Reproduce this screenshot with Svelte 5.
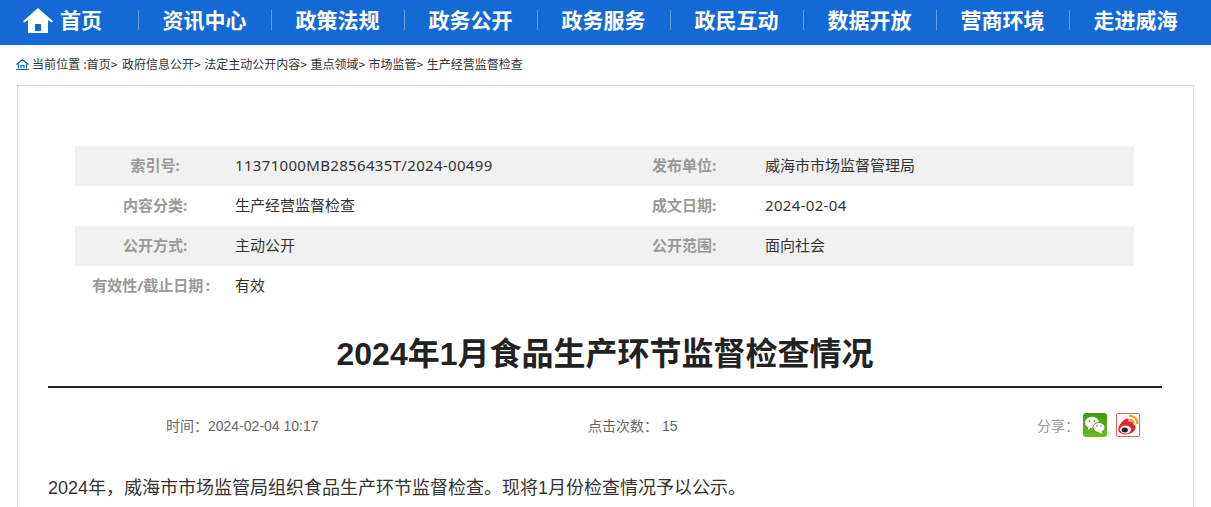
<script>
  const nav = ['资讯中心','政策法规','政务公开','政务服务','政民互动','数据开放','营商环境','走进威海'];
  const crumbs = ['政府信息公开','法定主动公开内容','重点领域','市场监管'];
  const rows = [
    [['索引号:','11371000MB2856435T/2024-00499'],['发布单位:','威海市市场监督管理局']],
    [['内容分类:','生产经营监督检查'],['成文日期:','2024-02-04']],
    [['公开方式:','主动公开'],['公开范围:','面向社会']],
    [['有效性/截止日期\u2009:\u00a0\u00a0','有效'],['','']]
  ];
  const isLatin = (s) => /^[\x00-\x7f]+$/.test(s);
</script>

<div class="page">
  <nav class="nav">
    <a class="item home">
      <svg class="house" viewBox="0 0 30 25" width="30" height="25" aria-hidden="true">
        <path fill="#fff" fill-rule="evenodd" d="M15 0 L30 13.2 L28.6 14.6 L25 12 L25 25 L5 25 L5 12 L1.4 14.6 L0 13.2 Z M12 16 L12 23 L18 23 L18 16 Z"/>
      </svg>
      <span>首页</span>
    </a>
    {#each nav as label}
      <a class="item">{label}</a>
    {/each}
  </nav>

  <div class="crumbs">
    <svg class="crumb-icon" viewBox="0 0 13 11" width="13" height="11" aria-hidden="true">
      <path fill="none" stroke="#0f5fb8" stroke-width="1.1" d="M0.5 5.5 L6.5 0.8 L12.5 5.5 M2.5 4.5 V9.5 M10.5 4.5 V9.5 M5 9.5 V6.5 H8 V9.5"/>
      <path stroke="#0f5fb8" stroke-width="1.1" d="M0 10.5 H13"/>
    </svg>
    <span class="first">当前位置 :首页&gt;</span>
    {#each crumbs as c}<span>{c}&gt;</span>{/each}
    <span>生产经营监督检查</span>
  </div>

  <main class="card">
    <div class="info">
      {#each rows as row}
        <div class="row">
          {#each row as cell}
            <div class="label">{cell[0]}</div>
            <div class="value" class:latin={isLatin(cell[1])}>{cell[1]}</div>
          {/each}
        </div>
      {/each}
    </div>

    <h1 class="title">2024年1月食品生产环节监督检查情况</h1>

    <div class="meta">
      <span class="time">时间：2024-02-04 10:17</span>
      <span class="hits">点击次数： 15</span>
      <span class="share">
        <span class="share-label">分享：</span>
        <svg class="wx" viewBox="0 0 24 24" width="24" height="24" aria-hidden="true">
          <defs>
            <linearGradient id="g" x1="0" y1="0" x2="0" y2="1">
              <stop offset="0" stop-color="#3f9a12"/><stop offset="1" stop-color="#6cbb1f"/>
            </linearGradient>
          </defs>
          <rect width="24" height="24" rx="3" fill="url(#g)"/>
          <ellipse cx="9" cy="9.5" rx="7" ry="5.8" fill="#fff"/>
          <path fill="#fff" d="M5.5 13 L5 17 L9.5 14 Z"/>
          <ellipse cx="16" cy="14.5" rx="6" ry="5" fill="#fff" stroke="#4aa315" stroke-width="1"/>
          <path fill="#fff" d="M18 18 L19.5 21 L15 19 Z"/>
          <circle cx="6.5" cy="8" r=".9" fill="#4aa315"/><circle cx="11.5" cy="8" r=".9" fill="#4aa315"/>
          <circle cx="14" cy="13" r=".8" fill="#4aa315"/><circle cx="18" cy="13" r=".8" fill="#4aa315"/>
        </svg>
        <svg class="wb" viewBox="0 0 24 24" width="24" height="24" aria-hidden="true">
          <rect x=".5" y=".5" width="23" height="23" rx="1.5" fill="#fff" stroke="#dd6a66"/>
          <path fill="#e6252b" d="M9.5 6 C12 4.5 13.5 6 12.5 9 C15 8 17.5 8.5 17 11 C20 12 20.5 15.5 18 18 C14 22.5 4.5 22.5 2.5 18 C1.5 13.5 5.5 8.5 9.5 6 Z"/>
          <ellipse cx="9.5" cy="16.5" rx="5.6" ry="4" fill="#fff"/>
          <ellipse cx="8.8" cy="17" rx="3.1" ry="2.5" fill="#222"/>
          <path fill="none" stroke="#f39c1f" stroke-width="2.2" d="M13 2.8 C18 2.3 21.8 6.3 21.2 11 M13.5 6.8 C16 6.5 18 8.5 17.6 10.6"/>
        </svg>
      </span>
    </div>

    <p class="body">2024年，威海市市场监管局组织食品生产环节监督检查。现将1月份检查情况予以公示。</p>
  </main>
</div>

<style>
  :global(html), :global(body) { margin: 0; height: 507px; overflow: hidden; background: #fff; }
  .page {
    font-family: "Liberation Sans", "Noto Sans CJK SC", sans-serif;
    color: #333;
    height: 507px;
    overflow: hidden;
  }
  .nav {
    height: 45px;
    background: #1469d4;
    display: grid;
    grid-template-columns: 138px repeat(8, 133px);
    align-items: start;
  }
  .item {
    position: relative;
    display: flex;
    align-items: center;
    justify-content: center;
    color: #fff;
    font-size: 21px;
    font-weight: 700;
    font-family: "Noto Sans CJK SC", sans-serif;
    height: 38px;
  }
  .item:not(.home)::before {
    content: "";
    position: absolute;
    left: 0;
    top: 10px;
    height: 20px;
    width: 1px;
    background: rgba(255,255,255,.35);
  }
  .home { justify-content: flex-start; padding-left: 23px; gap: 7px; }
  .house { flex: none; margin-top: 3px; }
  .crumbs {
    height: 40px;
    box-sizing: border-box;
    padding: 0 0 3px 16px;
    display: flex;
    align-items: center;
    font-size: 12px;
    gap: 3.5px;
    white-space: nowrap;
    color: #333;
    font-family: "Noto Sans CJK SC", sans-serif;
  }
  .crumb-icon { margin: 2px -0.5px 0 0; }
  .first { letter-spacing: .1px; margin-right: 1px; }
  .card {
    margin: 0 17px;
    border: 1px solid #d6d6d6;
    padding: 60px 31px 0 30px;
    height: 600px;
    box-sizing: border-box;
  }
  .info { margin: 0 28px 0 27px; font-size: 15px; font-family: "Noto Sans", "Noto Sans CJK SC", sans-serif; }
  .row {
    display: grid;
    grid-template-columns: 160px 370px 160px 1fr;
    height: 40px;
    line-height: 38px;
  }
  .row:nth-child(odd) { background: #f1f1f1; }
  .label { text-align: center; font-weight: 700; color: #999; white-space: nowrap; }
  .label:nth-child(3) { padding-right: 2px; box-sizing: border-box; }
  .value { color: #333; }
  .value.latin { letter-spacing: .33px; }
  .title {
    margin: 0;
    font-size: 32px;
    font-weight: 700;
    text-align: center;
    color: #222;
    border-bottom: 2px solid #222;
    height: 40px;
    padding: 28px 0 12px;
    line-height: 40px;
  }
  .meta {
    display: grid;
    grid-template-columns: 118px 422px 449px 1fr;
    height: 74px;
    align-items: center;
    font-size: 14px;
    color: #666;
  }
  .time { grid-column: 2; }
  .hits { grid-column: 3; }
  .share { grid-column: 4; display: flex; align-items: center; }
  .share-label { color: #999; margin-right: 4px; width: 42px; flex: none; }
  .wb { margin-left: 9px; }
  .body {
    margin: 0;
    font-size: 18px;
    line-height: 30px;
    color: #333;
    white-space: nowrap;
    padding-top: 11px;
  }
</style>
